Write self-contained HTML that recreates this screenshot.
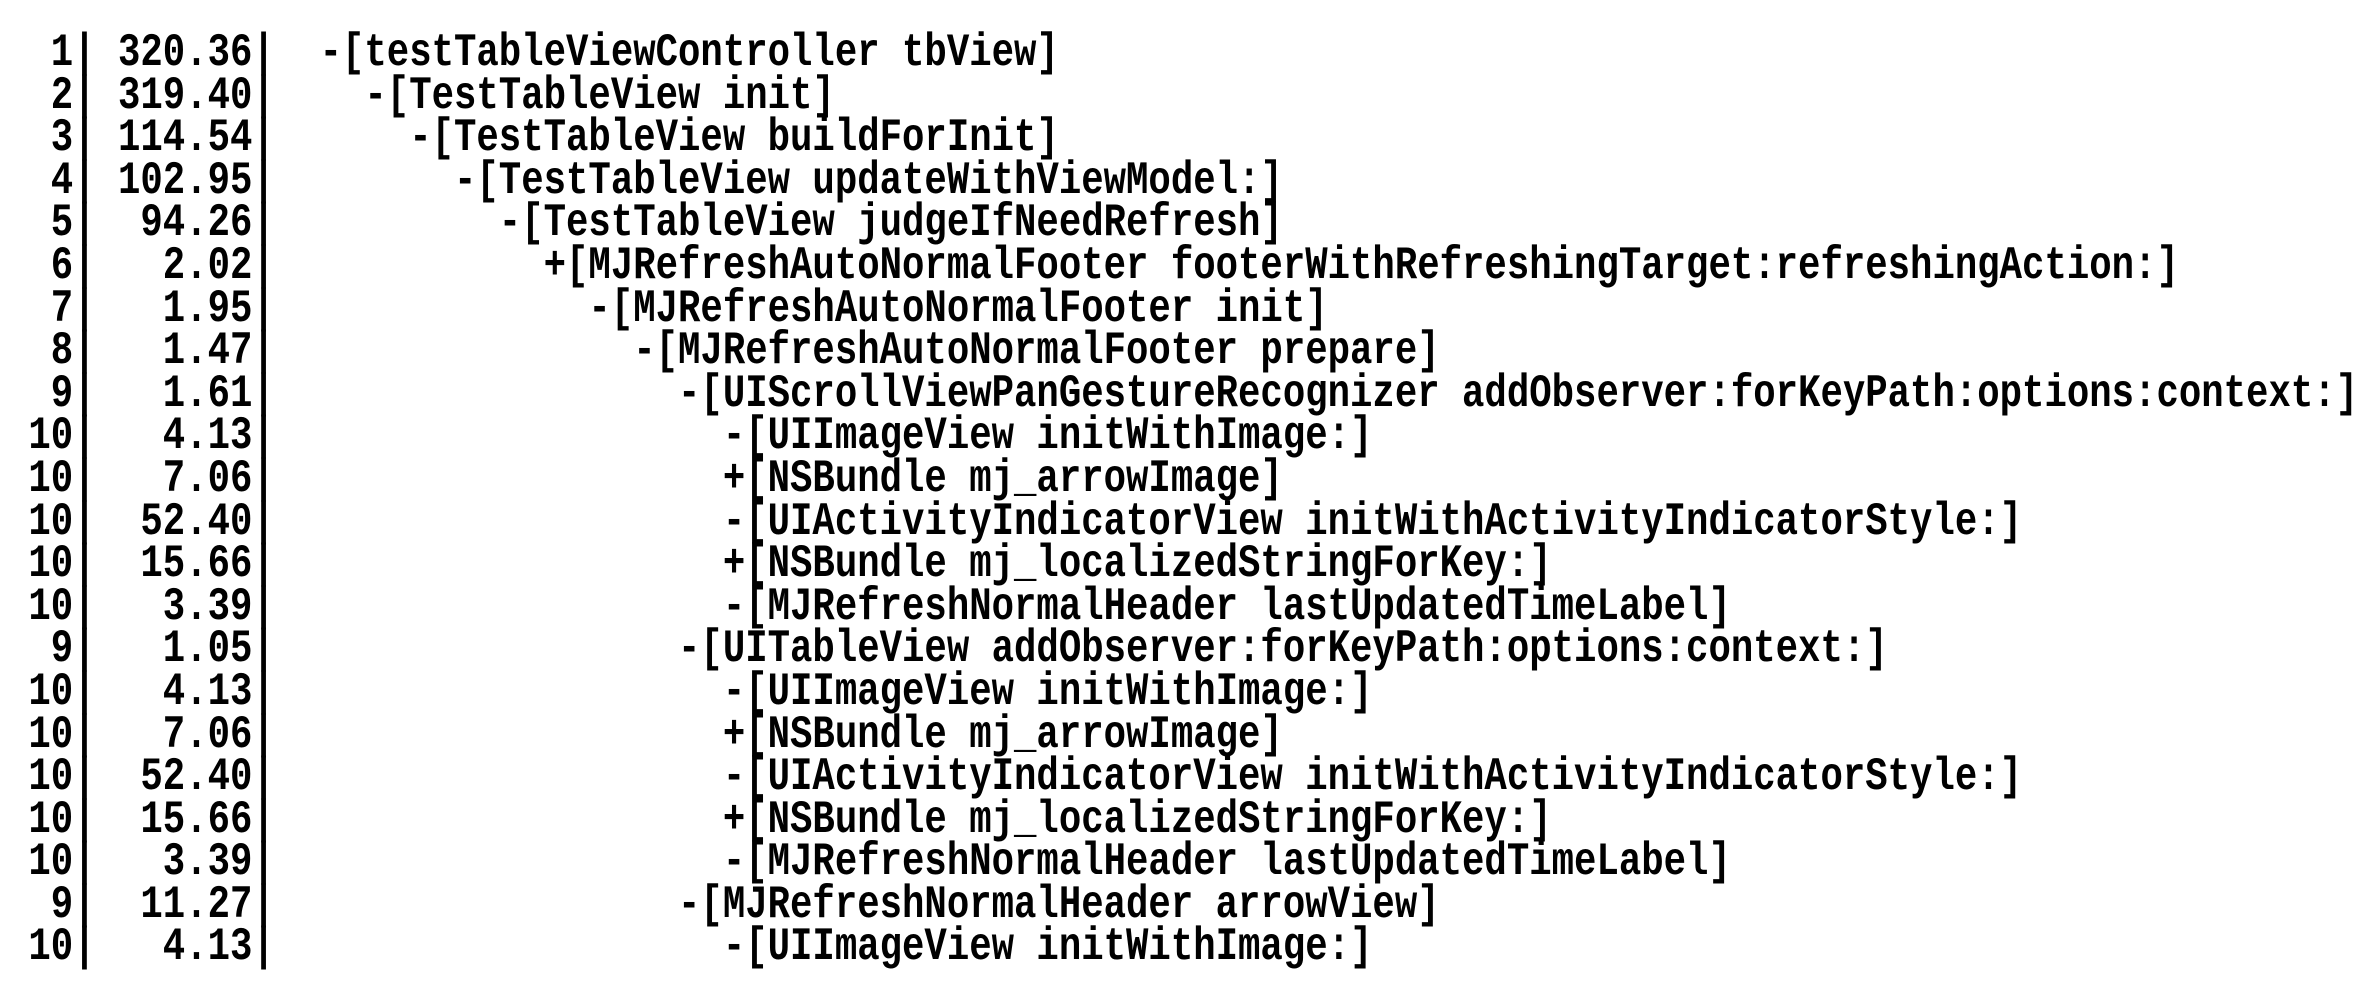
<!DOCTYPE html>
<html><head><meta charset="utf-8"><style>
html,body{margin:0;padding:0;background:#fff;width:2378px;height:996px;overflow:hidden}
#t{position:absolute;left:6px;top:33px;font-family:"Liberation Mono",monospace;font-weight:bold;font-size:37.33px;color:#000;white-space:pre}
#t div{height:42.6px;line-height:42.6px;transform:scaleY(1.25);transform-origin:50% 50%}
</style></head><body><div id="t"><div>  1| 320.36|  -[testTableViewController tbView]</div><div>  2| 319.40|    -[TestTableView init]</div><div>  3| 114.54|      -[TestTableView buildForInit]</div><div>  4| 102.95|        -[TestTableView updateWithViewModel:]</div><div>  5|  94.26|          -[TestTableView judgeIfNeedRefresh]</div><div>  6|   2.02|            +[MJRefreshAutoNormalFooter footerWithRefreshingTarget:refreshingAction:]</div><div>  7|   1.95|              -[MJRefreshAutoNormalFooter init]</div><div>  8|   1.47|                -[MJRefreshAutoNormalFooter prepare]</div><div>  9|   1.61|                  -[UIScrollViewPanGestureRecognizer addObserver:forKeyPath:options:context:]</div><div> 10|   4.13|                    -[UIImageView initWithImage:]</div><div> 10|   7.06|                    +[NSBundle mj_arrowImage]</div><div> 10|  52.40|                    -[UIActivityIndicatorView initWithActivityIndicatorStyle:]</div><div> 10|  15.66|                    +[NSBundle mj_localizedStringForKey:]</div><div> 10|   3.39|                    -[MJRefreshNormalHeader lastUpdatedTimeLabel]</div><div>  9|   1.05|                  -[UITableView addObserver:forKeyPath:options:context:]</div><div> 10|   4.13|                    -[UIImageView initWithImage:]</div><div> 10|   7.06|                    +[NSBundle mj_arrowImage]</div><div> 10|  52.40|                    -[UIActivityIndicatorView initWithActivityIndicatorStyle:]</div><div> 10|  15.66|                    +[NSBundle mj_localizedStringForKey:]</div><div> 10|   3.39|                    -[MJRefreshNormalHeader lastUpdatedTimeLabel]</div><div>  9|  11.27|                  -[MJRefreshNormalHeader arrowView]</div><div> 10|   4.13|                    -[UIImageView initWithImage:]</div></div></body></html>
